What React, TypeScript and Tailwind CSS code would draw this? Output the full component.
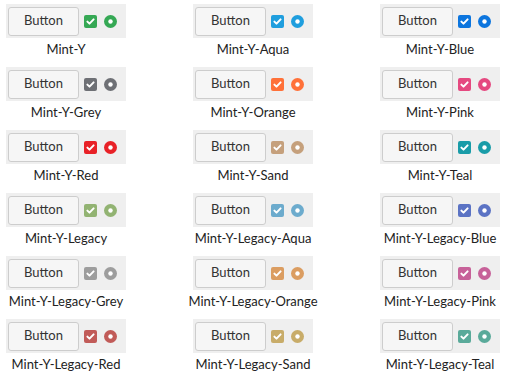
import React from "react";

const themes: [string, string][] = [
  ["Mint-Y", "#35a854"],
  ["Mint-Y-Aqua", "#1f9ede"],
  ["Mint-Y-Blue", "#0c75de"],
  ["Mint-Y-Grey", "#6e7075"],
  ["Mint-Y-Orange", "#ff7139"],
  ["Mint-Y-Pink", "#e54980"],
  ["Mint-Y-Red", "#e82127"],
  ["Mint-Y-Sand", "#c5a07c"],
  ["Mint-Y-Teal", "#199ca8"],
  ["Mint-Y-Legacy", "#92b372"],
  ["Mint-Y-Legacy-Aqua", "#6cabcd"],
  ["Mint-Y-Legacy-Blue", "#5b73c4"],
  ["Mint-Y-Legacy-Grey", "#9d9d9d"],
  ["Mint-Y-Legacy-Orange", "#db9d61"],
  ["Mint-Y-Legacy-Pink", "#c76199"],
  ["Mint-Y-Legacy-Red", "#c15b58"],
  ["Mint-Y-Legacy-Sand", "#c8ac69"],
  ["Mint-Y-Legacy-Teal", "#5aaa9a"],
];

function Check({ color }: { color: string }) {
  return (
    <svg width="13" height="13" viewBox="0 0 13 13">
      <rect x="0" y="0" width="13" height="13" rx="2" fill={color} />
      <path d="M3.4 6.6 L5.5 8.6 L9.6 4.4" stroke="#fff" strokeWidth="2" fill="none" strokeLinecap="round" strokeLinejoin="round" />
    </svg>
  );
}

function Radio({ color }: { color: string }) {
  return (
    <svg width="13" height="13" viewBox="0 0 13 13">
      <circle cx="6.5" cy="6.5" r="6.5" fill={color} />
      <circle cx="6.5" cy="6.5" r="2.2" fill="#fff" />
    </svg>
  );
}

function Cell({ name, color }: { name: string; color: string }) {
  return (
    <div className="flex h-[63px] w-[120px] flex-col items-center">
      <div className="flex h-[34px] w-[120px] items-center bg-[#efefef] pl-[2px]">
        <div className="flex h-[29px] w-[71px] items-center justify-center rounded-[3px] border border-[#cdcdcd] bg-[#f6f6f6] text-[13px] text-[#333]">
          Button
        </div>
        <div className="ml-[5px] flex">
          <Check color={color} />
        </div>
        <div className="ml-[7px] flex">
          <Radio color={color} />
        </div>
      </div>
      <div className="mt-[3px] whitespace-nowrap text-[13px] leading-[16px] text-[#222]">{name}</div>
    </div>
  );
}

export default function App() {
  return (
    <div
      className="h-[373px] w-[505px] overflow-hidden bg-white pl-[6px] pt-[4px]"
      style={{ fontFamily: "Lato, 'Noto Sans', sans-serif" }}
    >
      <div className="grid grid-cols-[120px_120px_120px] gap-x-[67px]">
        {themes.map(([n, c]) => (
          <Cell key={n} name={n} color={c} />
        ))}
      </div>
    </div>
  );
}
